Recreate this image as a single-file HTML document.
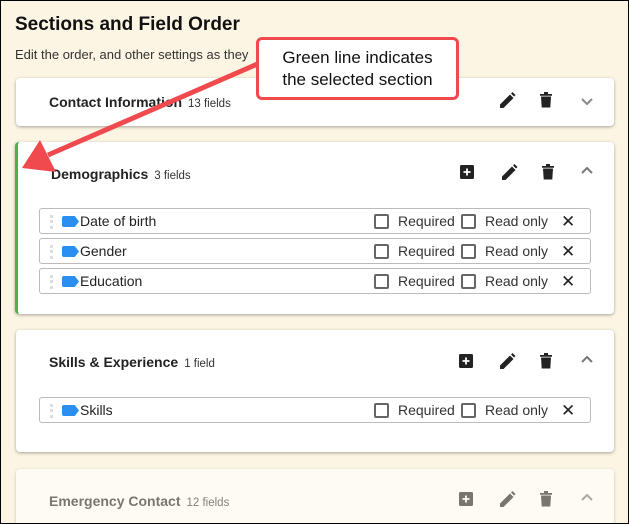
<!DOCTYPE html>
<html><head><style>
*{box-sizing:border-box;margin:0;padding:0}
html,body{width:629px;height:524px;overflow:hidden}
body{background:#fdf5e3;font-family:"Liberation Sans",sans-serif;position:relative;color:#222}
#wrap{position:absolute;left:0;top:0;width:629px;height:524px;overflow:hidden}
#frame{position:absolute;left:0;top:0;width:629px;height:524px;border:1px solid #000;pointer-events:none}
h1{position:absolute;left:15px;top:14px;font-size:19px;font-weight:bold;color:#111}
.sub{position:absolute;left:15px;top:47px;font-size:13px;color:#333}
.card{position:absolute;left:16px;width:598px;background:#fff;border-radius:4px;box-shadow:0 1px 3px rgba(0,0,0,.35)}
.title{position:absolute;left:33px;font-size:14px;font-weight:bold;color:#222}
.title span{font-weight:normal;font-size:11.5px;margin-left:6px;color:#333}
.ic{position:absolute}
.row{position:absolute;left:23px;width:552px;height:26px;border:1px solid #bbb;border-radius:3px}
.row .dots{position:absolute;left:10px;top:6px;width:3px;height:14px;border-left:3px dotted #ddd}
.row .tag{position:absolute;left:22px;top:7px;width:17px;height:11px;background:#2a8ff0;border-radius:2px;clip-path:polygon(0 0,75% 0,100% 50%,75% 100%,0 100%)}
.row .lbl{position:absolute;left:40px;top:4px;font-size:14px;color:#222}
.cb{position:absolute;top:5px;width:15px;height:15px;border:2px solid #666;border-radius:2px}
.cl{position:absolute;top:4px;font-size:14px;color:#333}
.x{position:absolute;left:521px;top:3px;font-size:17px;color:#222}
</style></head><body>
<div id="wrap">
<h1>Sections and Field Order</h1>
<div class="sub">Edit the order, and other settings as they</div>

<svg width="0" height="0" style="position:absolute"><defs>
<g id="add"><rect x="0" y="0" width="14" height="14" rx="1.5" fill="#222"/><path d="M7 3.5v7M3.5 7h7" stroke="#fff" stroke-width="1.8"/></g>
<g id="pen"><path d="M1 16v-3.5L11 2.5l3.5 3.5-10 10z M12 1.5l1.5-1.5 3 3-1.5 1.5z" fill="#222"/></g>
<g id="trash"><path d="M0 2h12v1.8H0z M4 0h4v2H4z M1 4.5h10l-.7 11H1.7z" fill="#222"/></g>
</defs></svg>

<div class="card" style="top:78px;height:48px">
  <div class="title" style="top:16px">Contact Information<span>13 fields</span></div>
  <svg class="ic" style="left:483px;top:14px" width="17" height="17"><use href="#pen"/></svg>
  <svg class="ic" style="left:524px;top:14px" width="12" height="16"><use href="#trash"/></svg>
  <svg class="ic" style="left:565px;top:20px" width="12" height="8"><path d="M1 1l5 5 5-5" stroke="#888" stroke-width="2" fill="none"/></svg>
</div>

<div class="card" style="top:142px;height:172px;border-left:3px solid #4caf50;left:15px;width:599px">
  <div class="title" style="top:24px">Demographics<span>3 fields</span></div>
  <svg class="ic" style="left:442px;top:23px" width="14" height="14"><use href="#add"/></svg>
  <svg class="ic" style="left:483px;top:22px" width="17" height="17"><use href="#pen"/></svg>
  <svg class="ic" style="left:524px;top:22px" width="12" height="16"><use href="#trash"/></svg>
  <svg class="ic" style="left:563px;top:24px" width="12" height="8"><path d="M1 7l5-5 5 5" stroke="#777" stroke-width="2" fill="none"/></svg>
  <div class="row" style="top:66px;left:21px"><div class="dots"></div><div class="tag"></div><div class="lbl">Date of birth</div><div class="cb" style="left:334px"></div><div class="cl" style="left:358px">Required</div><div class="cb" style="left:421px"></div><div class="cl" style="left:445px">Read only</div><div class="x">✕</div></div>
  <div class="row" style="top:96px;left:21px"><div class="dots"></div><div class="tag"></div><div class="lbl">Gender</div><div class="cb" style="left:334px"></div><div class="cl" style="left:358px">Required</div><div class="cb" style="left:421px"></div><div class="cl" style="left:445px">Read only</div><div class="x">✕</div></div>
  <div class="row" style="top:126px;left:21px"><div class="dots"></div><div class="tag"></div><div class="lbl">Education</div><div class="cb" style="left:334px"></div><div class="cl" style="left:358px">Required</div><div class="cb" style="left:421px"></div><div class="cl" style="left:445px">Read only</div><div class="x">✕</div></div>
</div>

<div class="card" style="top:330px;height:122px">
  <div class="title" style="top:24px">Skills &amp; Experience<span>1 field</span></div>
  <svg class="ic" style="left:443px;top:24px" width="14" height="14"><use href="#add"/></svg>
  <svg class="ic" style="left:483px;top:23px" width="17" height="17"><use href="#pen"/></svg>
  <svg class="ic" style="left:524px;top:23px" width="12" height="16"><use href="#trash"/></svg>
  <svg class="ic" style="left:565px;top:25px" width="12" height="8"><path d="M1 7l5-5 5 5" stroke="#777" stroke-width="2" fill="none"/></svg>
  <div class="row" style="top:67px"><div class="dots"></div><div class="tag"></div><div class="lbl">Skills</div><div class="cb" style="left:334px"></div><div class="cl" style="left:358px">Required</div><div class="cb" style="left:421px"></div><div class="cl" style="left:445px">Read only</div><div class="x">✕</div></div>
</div>

<div class="card" style="top:469px;height:70px;opacity:.6">
  <div class="title" style="top:24px">Emergency Contact<span>12 fields</span></div>
  <svg class="ic" style="left:443px;top:23px" width="14" height="14"><use href="#add"/></svg>
  <svg class="ic" style="left:483px;top:22px" width="17" height="17"><use href="#pen"/></svg>
  <svg class="ic" style="left:524px;top:22px" width="12" height="16"><use href="#trash"/></svg>
  <svg class="ic" style="left:565px;top:24px" width="12" height="8"><path d="M1 7l5-5 5 5" stroke="#777" stroke-width="2" fill="none"/></svg>
</div>

<svg style="position:absolute;left:0;top:0" width="629" height="524">
  <line x1="262" y1="62" x2="48" y2="155" stroke="#f04a4f" stroke-width="5"/>
  <polygon points="22,168 40,140 56,172" fill="#f04a4f"/>
</svg>
<div style="position:absolute;left:256px;top:37px;width:203px;height:63px;background:#fff;border:3px solid #f04a4f;border-radius:6px;font-size:17px;text-align:center;line-height:22px;padding-top:7px;color:#111">Green line indicates<br>the selected section</div>
<div id="frame"></div>
</div>
</body></html>
